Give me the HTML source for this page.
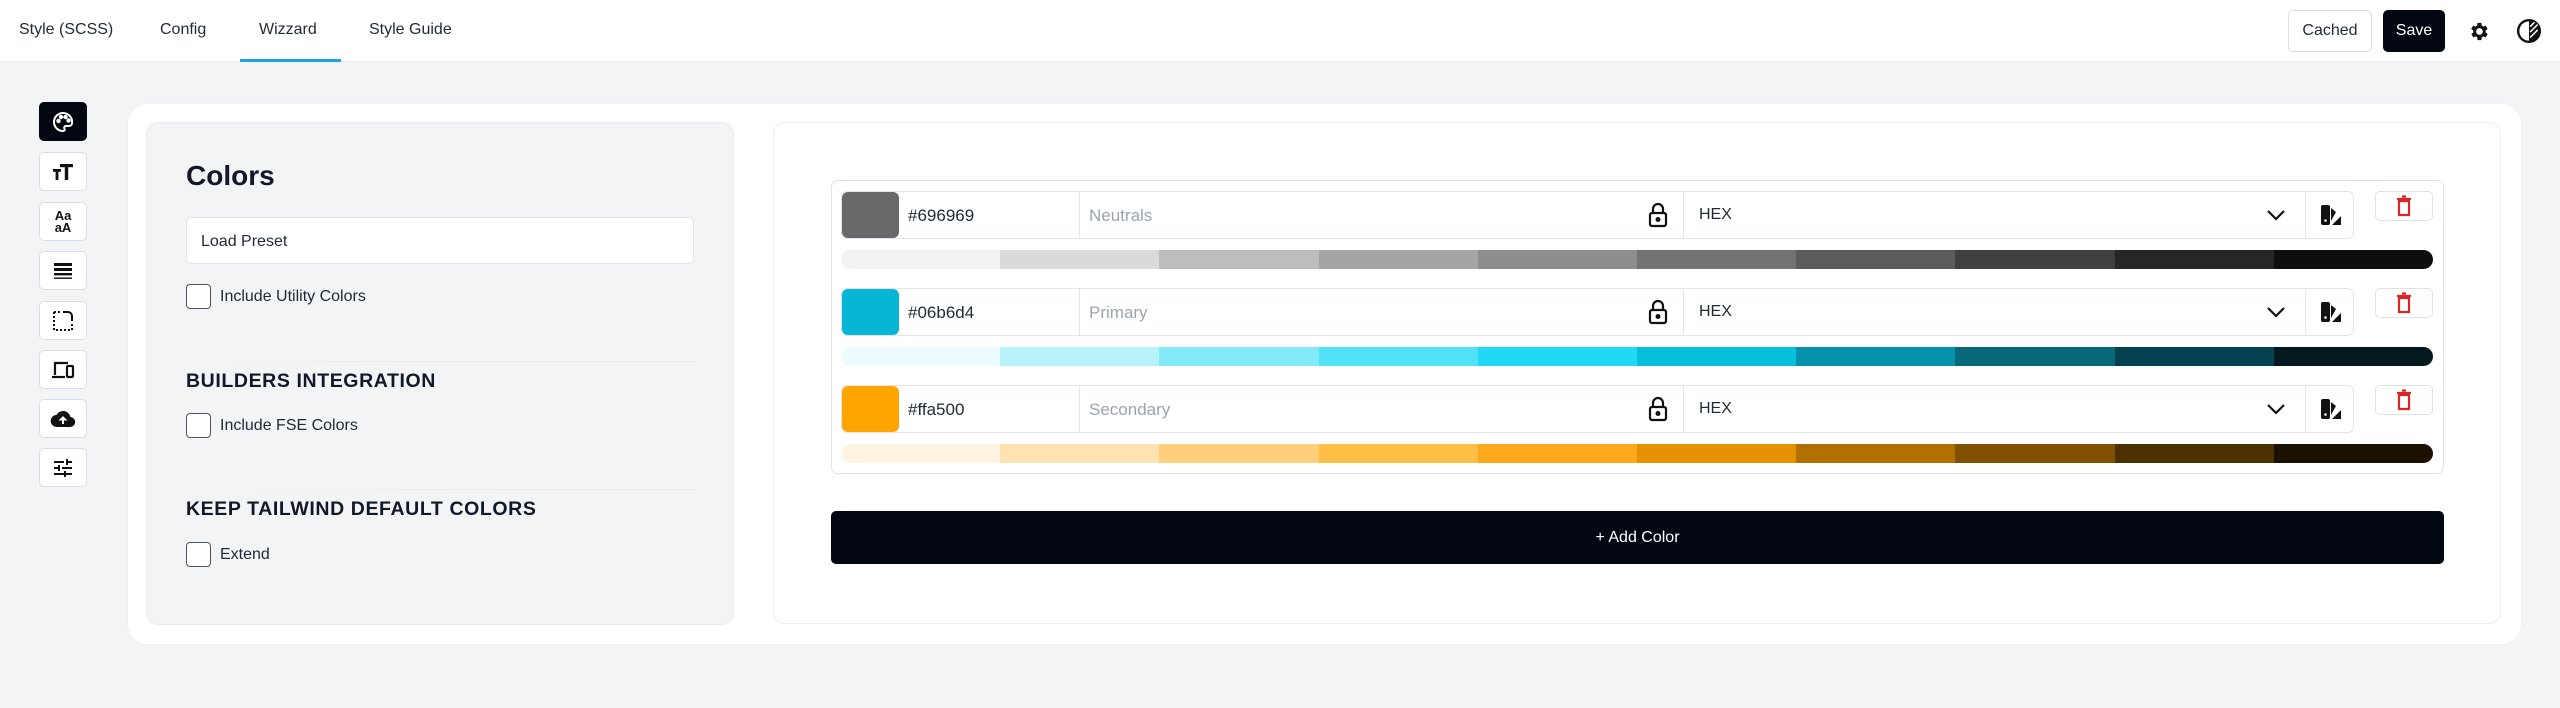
<!DOCTYPE html>
<html><head><meta charset="utf-8"><style>
*{box-sizing:border-box;margin:0;padding:0}
body{width:2560px;height:708px;background:#f3f4f6;font-family:"Liberation Sans",Arial,sans-serif;color:#111827;position:relative;overflow:hidden}
.abs{position:absolute}
.header{left:0;top:0;width:2560px;height:62px;background:#fff;border-bottom:1px solid #eceef2}
.tab{position:absolute;top:21px;font-size:16px;color:#1f2937}
.sb{position:absolute;left:39px;width:48px;height:39px;border:1px solid #d8dee8;border-radius:5px;background:#fff;display:flex;align-items:center;justify-content:center}
.cb{position:absolute;width:25px;height:25px;border:1.5px solid #4b5563;border-radius:4px;background:#fff}
.lbl{position:absolute;font-size:16px;color:#1f2937}
.h2{position:absolute;left:186px;font-size:19.5px;font-weight:bold;letter-spacing:0.6px;color:#111827}
.row{position:absolute;left:841px;width:1513px;height:48px;border:1px solid #dfe5ee;border-radius:6px;background:#fff}
.sw{position:absolute;left:0;top:0;width:57px;height:46px;border-radius:6px}
.bar{position:absolute;left:841px;width:1592px;height:19px;border-radius:10px;overflow:hidden;display:flex}
.bar div{flex:1}
.del{position:absolute;left:2375px;width:58px;height:30px;border:1px solid #dbe2ec;border-radius:5px;background:#fff;display:flex;align-items:center;justify-content:center}
</style></head><body>
<div class="abs header">
  <div class="tab" style="left:19px">Style (SCSS)</div>
  <div class="tab" style="left:160px">Config</div>
  <div class="tab" style="left:259px">Wizzard</div>
  <div class="tab" style="left:369px">Style Guide</div>
  <div class="abs" style="left:240px;top:59px;width:101px;height:3px;background:#1ba3e8"></div>
  <div class="abs" style="left:2288px;top:10px;width:84px;height:42px;border:1px solid #d8dee8;border-radius:5px;font-size:16px;display:flex;align-items:center;justify-content:center;color:#1f2937">Cached</div>
  <div class="abs" style="left:2383px;top:10px;width:62px;height:42px;background:#030712;border-radius:5px;font-size:16px;color:#fff;display:flex;align-items:center;justify-content:center">Save</div>
  <svg class="abs" style="left:2467px;top:20px" width="23" height="23" viewBox="0 0 24 24"><path fill="#111" d="M19.4 13a7.5 7.5 0 0 0 0-2l2.1-1.6-2-3.5-2.5 1a7 7 0 0 0-1.7-1L15 3h-4l-.4 2.9a7 7 0 0 0-1.7 1l-2.5-1-2 3.5L6.6 11a7.5 7.5 0 0 0 0 2l-2.1 1.6 2 3.5 2.5-1a7 7 0 0 0 1.7 1L11 21h4l.4-2.9a7 7 0 0 0 1.7-1l2.5 1 2-3.5zM13 15.5a3.5 3.5 0 1 1 0-7 3.5 3.5 0 0 1 0 7z"/></svg>
  <svg class="abs" style="left:2516px;top:18px" width="26" height="26" viewBox="0 0 24 24"><circle cx="12" cy="12" r="10" fill="none" stroke="#111" stroke-width="2.2"/><path d="M12 2a10 10 0 0 1 0 20z" fill="#111"/><path d="M13 8l4-4M13 13l7-7M13 18l7-7" stroke="#fff" stroke-width="1.4"/></svg>
</div>

<div class="sb" style="top:102px;background:#030712;border-color:#030712"><svg width="24" height="24" viewBox="0 0 24 24" fill="none" stroke="#fff" stroke-width="2"><path d="M12 3a9 9 0 1 0 0 18c1.5 0 2-1 1.5-2s-.5-3 1.5-3h3a3 3 0 0 0 3-3 9 9 0 0 0-9-10z"/><circle cx="7.5" cy="11" r="1.2" fill="#fff"/><circle cx="10" cy="7" r="1.2" fill="#fff"/><circle cx="14.5" cy="7" r="1.2" fill="#fff"/><circle cx="17.5" cy="10.5" r="1.2" fill="#fff"/></svg></div>
<div class="sb" style="top:152px"><svg width="24" height="24" viewBox="0 0 24 24" fill="#111"><rect x="9" y="4" width="13" height="3.2"/><rect x="13.8" y="4" width="3.4" height="16"/><rect x="2" y="9" width="8" height="2.8"/><rect x="4.6" y="9" width="2.8" height="11"/></svg></div>
<div class="sb" style="top:202px"><div style="font-size:13px;font-weight:bold;line-height:12px;text-align:center;color:#111">Aa<br>aA</div></div>
<div class="sb" style="top:251px"><svg width="24" height="24" viewBox="0 0 24 24" fill="#111"><rect x="3" y="4" width="18" height="3"/><rect x="3" y="9" width="18" height="3"/><rect x="3" y="14" width="18" height="2.4"/><rect x="3" y="18.5" width="18" height="1.4"/></svg></div>
<div class="sb" style="top:301px"><svg width="24" height="24" viewBox="0 0 24 24" fill="none" stroke="#111" stroke-width="2"><path d="M12 3h5a4 4 0 0 1 4 4v5"/><path d="M3 3v18h18" stroke-dasharray="2 2"/><path d="M3 3h6" stroke-dasharray="2 2"/><path d="M21 15v6" stroke-dasharray="2 2"/></svg></div>
<div class="sb" style="top:350px"><svg width="26" height="24" viewBox="0 0 26 24" fill="none" stroke="#111" stroke-width="2.2"><path d="M5 17V5h13"/><path d="M2 19h13"/><rect x="17" y="8" width="6" height="11" rx="1"/></svg></div>
<div class="sb" style="top:399px"><svg width="26" height="24" viewBox="0 0 24 24"><path fill="#111" d="M19.4 10A7.5 7.5 0 0 0 5.4 8 6 6 0 0 0 6 20h13a5 5 0 0 0 .4-10z"/><path fill="#fff" d="M12 9l-4.5 4.5H11V17h2v-3.5h3.5z"/></svg></div>
<div class="sb" style="top:448px"><svg width="24" height="24" viewBox="0 0 24 24" fill="#111"><rect x="3" y="5" width="10" height="2"/><rect x="15" y="3" width="2" height="6"/><rect x="17" y="5" width="4" height="2"/><rect x="3" y="11" width="4" height="2"/><rect x="7" y="9" width="2" height="6"/><rect x="11" y="11" width="10" height="2"/><rect x="3" y="17" width="10" height="2"/><rect x="13" y="15" width="2" height="6"/><rect x="15" y="17" width="6" height="2"/></svg></div>

<div class="abs" style="left:127px;top:103px;width:2395px;height:542px;background:#fff;border-radius:20px;border:1px solid #eef0f3"></div>

<div class="abs" style="left:146px;top:122px;width:588px;height:503px;background:#f3f4f6;border:1px solid #e8ebef;border-radius:12px"></div>
<div class="abs" style="left:186px;top:160px;font-size:28px;font-weight:bold;color:#111827">Colors</div>
<div class="abs" style="left:186px;top:217px;width:508px;height:47px;background:#fff;border:1.5px solid #dde3ec;border-radius:5px;font-size:16px;padding:15px 0 0 14px;color:#1f2937">Load Preset</div>
<div class="cb" style="left:186px;top:284px"></div><div class="lbl" style="left:220px;top:288px">Include Utility Colors</div>
<div class="abs" style="left:186px;top:361px;width:508px;height:1px;background:linear-gradient(90deg,rgba(229,231,235,0),#e5e7eb 50%)"></div>
<div class="h2" style="top:370px">BUILDERS INTEGRATION</div>
<div class="cb" style="left:186px;top:413px"></div><div class="lbl" style="left:220px;top:417px">Include FSE Colors</div>
<div class="abs" style="left:186px;top:489px;width:508px;height:1px;background:linear-gradient(90deg,rgba(229,231,235,0),#e5e7eb 75%)"></div>
<div class="h2" style="top:498px">KEEP TAILWIND DEFAULT COLORS</div>
<div class="cb" style="left:186px;top:542px"></div><div class="lbl" style="left:220px;top:546px">Extend</div>

<div class="abs" style="left:773px;top:122px;width:1728px;height:502px;background:#fff;border:1px solid #eceef2;border-radius:12px"></div>
<div class="abs" style="left:831px;top:180px;width:1613px;height:294px;border:1.5px solid #dbe3ee;border-radius:7px"></div>

<div class="row" style="top:191px"><div class="sw" style="background:#696969"></div><div class="abs" style="left:66px;top:14px;font-size:17px;color:#1f2937">#696969</div><div class="abs" style="left:237px;top:0;width:1px;height:46px;background:#e1e6ee"></div><div class="abs" style="left:247px;top:14px;font-size:17px;color:#9ca3af">Neutrals</div></div>
<div class="row" style="top:288px"><div class="sw" style="background:#06b6d4"></div><div class="abs" style="left:66px;top:14px;font-size:17px;color:#1f2937">#06b6d4</div><div class="abs" style="left:237px;top:0;width:1px;height:46px;background:#e1e6ee"></div><div class="abs" style="left:247px;top:14px;font-size:17px;color:#9ca3af">Primary</div></div>
<div class="row" style="top:385px"><div class="sw" style="background:#ffa500"></div><div class="abs" style="left:66px;top:14px;font-size:17px;color:#1f2937">#ffa500</div><div class="abs" style="left:237px;top:0;width:1px;height:46px;background:#e1e6ee"></div><div class="abs" style="left:247px;top:14px;font-size:17px;color:#9ca3af">Secondary</div></div>

<div class="abs" style="left:0;top:191px">
 <svg class="abs" style="left:1648px;top:11px" width="20" height="26" viewBox="0 0 20 26" fill="none" stroke="#111" stroke-width="2.2"><path d="M5 11V7a5 5 0 0 1 10 0v4"/><rect x="2" y="11" width="16" height="13" rx="2"/><circle cx="10" cy="17.5" r="1.4" fill="#111"/></svg>
 <div class="abs" style="left:1683px;top:0;width:1px;height:48px;background:#e1e6ee"></div>
 <div class="abs" style="left:1699px;top:15px;font-size:16px;color:#1f2937">HEX</div>
 <svg class="abs" style="left:2266px;top:17px" width="20" height="14" viewBox="0 0 20 14" fill="none" stroke="#111" stroke-width="2.2"><path d="M2 3l8 8 8-8"/></svg>
 <div class="abs" style="left:2305px;top:0;width:1px;height:48px;background:#e1e6ee"></div>
 <svg class="abs" style="left:2320px;top:13px" width="22" height="22" viewBox="0 0 22 22" fill="#111"><rect x="1" y="1" width="9" height="20" rx="2"/><path d="M11 4l5 4-5 9z"/><path d="M12 21l9-9v9z"/><circle cx="5.5" cy="16.5" r="1.3" fill="#fff"/></svg>
</div>
<div class="abs" style="left:0;top:288px">
 <svg class="abs" style="left:1648px;top:11px" width="20" height="26" viewBox="0 0 20 26" fill="none" stroke="#111" stroke-width="2.2"><path d="M5 11V7a5 5 0 0 1 10 0v4"/><rect x="2" y="11" width="16" height="13" rx="2"/><circle cx="10" cy="17.5" r="1.4" fill="#111"/></svg>
 <div class="abs" style="left:1683px;top:0;width:1px;height:48px;background:#e1e6ee"></div>
 <div class="abs" style="left:1699px;top:15px;font-size:16px;color:#1f2937">HEX</div>
 <svg class="abs" style="left:2266px;top:17px" width="20" height="14" viewBox="0 0 20 14" fill="none" stroke="#111" stroke-width="2.2"><path d="M2 3l8 8 8-8"/></svg>
 <div class="abs" style="left:2305px;top:0;width:1px;height:48px;background:#e1e6ee"></div>
 <svg class="abs" style="left:2320px;top:13px" width="22" height="22" viewBox="0 0 22 22" fill="#111"><rect x="1" y="1" width="9" height="20" rx="2"/><path d="M11 4l5 4-5 9z"/><path d="M12 21l9-9v9z"/><circle cx="5.5" cy="16.5" r="1.3" fill="#fff"/></svg>
</div>
<div class="abs" style="left:0;top:385px">
 <svg class="abs" style="left:1648px;top:11px" width="20" height="26" viewBox="0 0 20 26" fill="none" stroke="#111" stroke-width="2.2"><path d="M5 11V7a5 5 0 0 1 10 0v4"/><rect x="2" y="11" width="16" height="13" rx="2"/><circle cx="10" cy="17.5" r="1.4" fill="#111"/></svg>
 <div class="abs" style="left:1683px;top:0;width:1px;height:48px;background:#e1e6ee"></div>
 <div class="abs" style="left:1699px;top:15px;font-size:16px;color:#1f2937">HEX</div>
 <svg class="abs" style="left:2266px;top:17px" width="20" height="14" viewBox="0 0 20 14" fill="none" stroke="#111" stroke-width="2.2"><path d="M2 3l8 8 8-8"/></svg>
 <div class="abs" style="left:2305px;top:0;width:1px;height:48px;background:#e1e6ee"></div>
 <svg class="abs" style="left:2320px;top:13px" width="22" height="22" viewBox="0 0 22 22" fill="#111"><rect x="1" y="1" width="9" height="20" rx="2"/><path d="M11 4l5 4-5 9z"/><path d="M12 21l9-9v9z"/><circle cx="5.5" cy="16.5" r="1.3" fill="#fff"/></svg>
</div>

<div class="del" style="top:191px"><svg width="14" height="22" viewBox="0 0 14 22" fill="none" stroke="#dc2626" stroke-width="2.2"><path d="M0 4h14M5 1.5h4"/><rect x="2" y="6" width="10" height="14"/></svg></div>
<div class="del" style="top:288px"><svg width="14" height="22" viewBox="0 0 14 22" fill="none" stroke="#dc2626" stroke-width="2.2"><path d="M0 4h14M5 1.5h4"/><rect x="2" y="6" width="10" height="14"/></svg></div>
<div class="del" style="top:385px"><svg width="14" height="22" viewBox="0 0 14 22" fill="none" stroke="#dc2626" stroke-width="2.2"><path d="M0 4h14M5 1.5h4"/><rect x="2" y="6" width="10" height="14"/></svg></div>

<div class="bar" style="top:250px"><div style="background:#f1f2f4"></div><div style="background:#dadada"></div><div style="background:#bdbdbd"></div><div style="background:#a5a5a5"></div><div style="background:#8d8d8d"></div><div style="background:#737373"></div><div style="background:#5b5b5b"></div><div style="background:#404040"></div><div style="background:#262626"></div><div style="background:#0e0e0e"></div></div>
<div class="bar" style="top:347px"><div style="background:#ecfbfe"></div><div style="background:#b8f2fb"></div><div style="background:#83eaf9"></div><div style="background:#52e2f7"></div><div style="background:#22d9f5"></div><div style="background:#06bfdd"></div><div style="background:#0592aa"></div><div style="background:#066a7b"></div><div style="background:#044250"></div><div style="background:#021a1f"></div></div>
<div class="bar" style="top:444px"><div style="background:#fff4e2"></div><div style="background:#ffe2b1"></div><div style="background:#ffcf7b"></div><div style="background:#ffbf47"></div><div style="background:#fca91c"></div><div style="background:#e59200"></div><div style="background:#b17100"></div><div style="background:#7f5100"></div><div style="background:#4b3000"></div><div style="background:#1b1100"></div></div>

<div class="abs" style="left:831px;top:511px;width:1613px;height:53px;background:#030712;border-radius:5px;color:#fff;font-size:16px;display:flex;align-items:center;justify-content:center">+ Add Color</div>
</body></html>
